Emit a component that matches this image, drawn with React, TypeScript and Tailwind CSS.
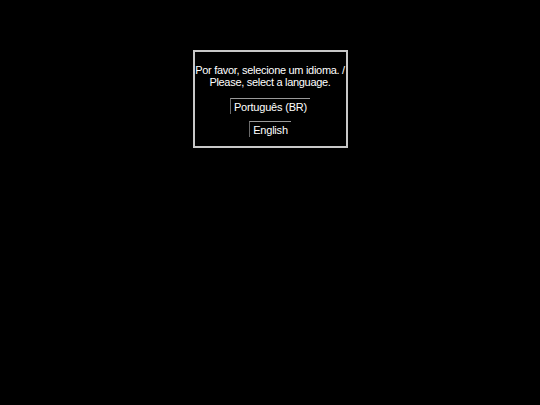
export default function App() {
  return (
    <div className="w-[540px] h-[405px] bg-black overflow-hidden" style={{ fontFamily: '"Liberation Sans", Arial, sans-serif' }}>
      <div className="pt-[50px] flex justify-center">
        <div className="w-[155px] h-[98px] border-2 border-[#c8c8c8] flex flex-col items-center pt-[12px] text-white text-[11px] leading-[12px] whitespace-nowrap">
          <div className="text-center tracking-[-0.3px]">
            <div>Por favor, selecione um idioma. /</div>
            <div>Please, select a language.</div>
          </div>
          <div className="mt-[10px] h-[16px] px-[3px] border-l border-t border-l-[#6a6a6a] border-t-[#9a9a9a] flex items-center tracking-[-0.2px]">Português (BR)</div>
          <div className="mt-[7px] h-[16px] px-[3px] border-l border-t border-l-[#6a6a6a] border-t-[#9a9a9a] flex items-center tracking-[-0.2px]">English</div>
        </div>
      </div>
    </div>
  );
}
